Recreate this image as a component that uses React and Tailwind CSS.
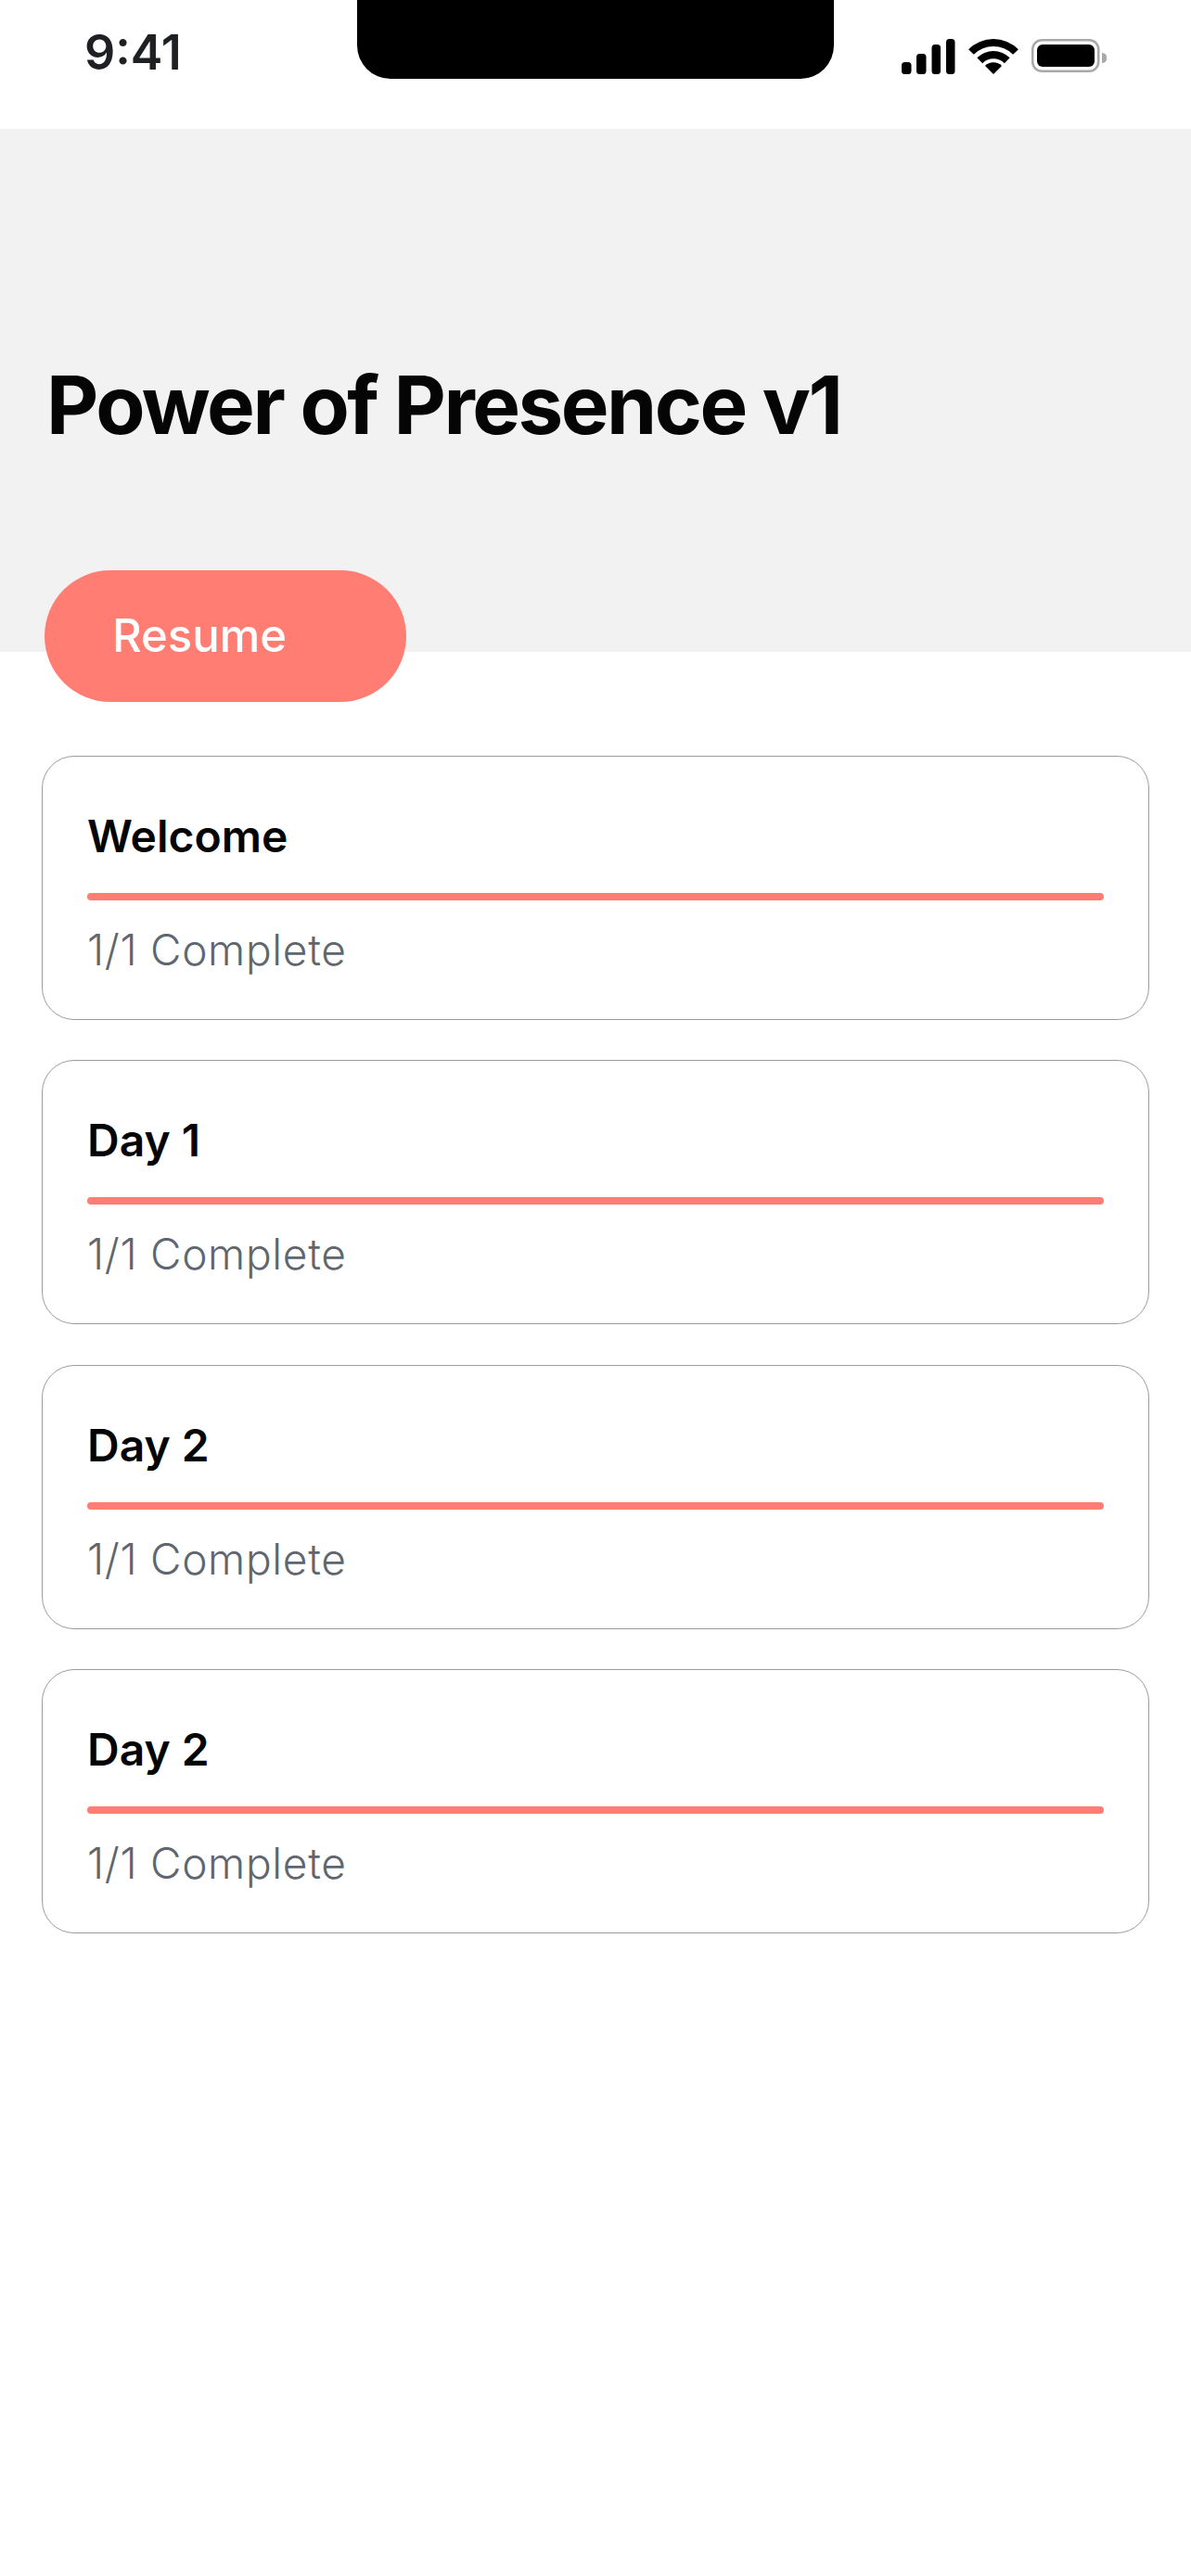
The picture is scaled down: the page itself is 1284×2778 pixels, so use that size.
const cards = ["Welcome", "Day 1", "Day 2", "Day 2"];

function StatusIcons() {
  return (
    <div className="flex items-start mt-[42px] ml-[73px]">
      <svg width="221" height="38" viewBox="0 0 221 38" fill="none">
        <rect x="0" y="25" width="10.5" height="13" rx="3.5" fill="#000" />
        <rect x="16" y="16" width="10.5" height="22" rx="3.5" fill="#000" />
        <rect x="32.5" y="6" width="9.5" height="32" rx="3.5" fill="#000" />
        <rect x="48" y="0" width="9.5" height="38" rx="3.5" fill="#000" />
        <g transform="translate(72 0)" fill="#000">
          <path d="M0.13 11.13A38 38 0 0 1 53.87 11.13L48.2 16.8A30 30 0 0 0 5.8 16.8Z" />
          <path d="M9.32 20.32A25 25 0 0 1 44.68 20.32L38.8 26.2A16.7 16.7 0 0 0 15.2 26.2Z" />
          <path d="M18.02 29.02A12.7 12.7 0 0 1 35.98 29.02L27 38Z" />
        </g>
        <rect x="141.25" y="1.25" width="71" height="33.5" rx="10" stroke="#a9a9a9" strokeWidth="2.5" />
        <rect x="146" y="6" width="62" height="24" rx="6" fill="#000" />
        <path d="M216 15a5.5 5.5 0 0 1 0 11Z" fill="#a9a9a9" />
      </svg>
    </div>
  );
}

function Card({ title }) {
  return (
    <div className="h-[285px] rounded-[35px] border border-[#9c9c9c] bg-white px-[48px] pt-[56px]">
      <div className="text-[48px] leading-[60px] font-[560] text-[#050505]">{title}</div>
      <div className="mt-[31px] h-[8px] rounded-full bg-[#ff7d73]" />
      <div className="mt-[25px] text-[46px] tracking-[0.7px] leading-[56px] font-light text-[#5f666f]">1/1 Complete</div>
    </div>
  );
}

export default function App() {
  return (
    <div className="w-[1284px] h-[2778px] bg-white font-['Inter',sans-serif] overflow-hidden">
      <div className="flex h-[139px] items-start">
        <div className="w-[385px] pl-[91px] pt-[28px] text-[52px] leading-[58px] font-semibold text-[#1f2024]">9:41</div>
        <div className="w-[514px] h-[85px] rounded-b-[36px] bg-black" />
        <StatusIcons />
      </div>
      <div className="h-[564px] bg-[#f2f2f2] pl-[50px] pt-[248px]">
        <h1 className="text-[87px] tracking-[-2.5px] leading-[100px] font-bold text-[#050505]">Power of Presence v1</h1>
      </div>
      <div className="-mt-[88px] ml-[48px] w-[390px] h-[142px] rounded-full bg-[#ff7d73] pl-[73px] flex items-center">
        <span className="text-[49px] font-[550] text-white">Resume</span>
      </div>
      <div className="mt-[58px] ml-[45px] w-[1194px] flex flex-col gap-[43.33px]">
        {cards.map((c, i) => (
          <Card key={i} title={c} />
        ))}
      </div>
    </div>
  );
}
